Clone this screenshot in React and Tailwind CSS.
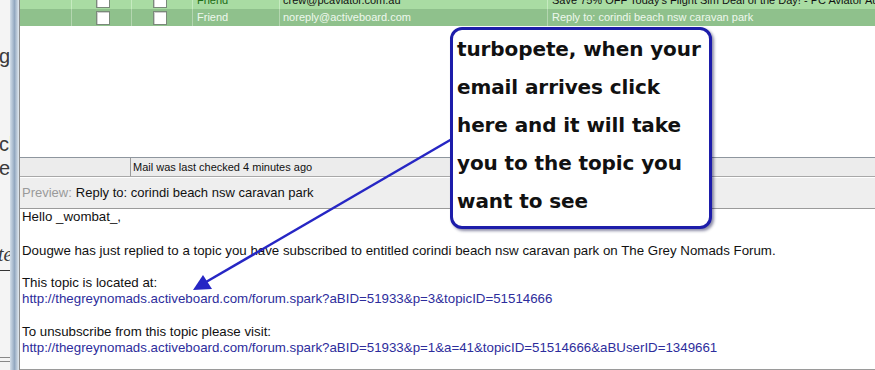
import React from 'react';

const COLS = ['w-[52px]', 'w-[60px]', 'w-[61px]', 'w-[87px]', 'w-[268px]', 'flex-1'];

const Checkbox = () => (
    <div className="w-[14px] h-[14px] bg-white border border-[#7a8a7a] shadow-[inset_1px_1px_0_#cfcfcf]" />
);

const MailRow = ({ selected, from, subject, className }) => {
    const divider = selected ? 'border-r border-[#b4d6b0]' : 'border-r border-[#c6ebc0]';
    const text = selected ? 'text-[#eef8ec]' : 'text-[#111]';
    return (
        <div className={`flex h-[17px] text-[11px] leading-[17px] whitespace-nowrap ${selected ? 'bg-[#8fc18c]' : 'bg-[#a9dca3]'} ${className || ''}`}>
            <div className={`${COLS[0]} ${divider}`} />
            <div className={`${COLS[1]} ${divider} flex items-center justify-center pl-[2px]`}><Checkbox /></div>
            <div className={`${COLS[2]} ${divider} flex items-center justify-center pr-[4px]`}><Checkbox /></div>
            <div className={`${COLS[3]} ${divider} pl-[4px] ${selected ? 'text-[#eef8ec]' : 'text-[#1b6d14]'}`}>Friend</div>
            <div className={`${COLS[4]} ${divider} pl-[3px] ${text} overflow-hidden`}>{from}</div>
            <div className={`${COLS[5]} pl-[4px] ${text} overflow-hidden`}>{subject}</div>
        </div>
    );
};

export default function App() {
    return (
        <div className="relative w-[875px] h-[370px] overflow-hidden bg-white flex font-['Liberation_Sans',Arial,sans-serif]">
            {/* window behind */}
            <div className="w-[10px] bg-[#f4f4f4] overflow-hidden text-[#3a3a3a] text-[20px] leading-[20px] flex flex-col">
                <div className="mt-[46px] -ml-[1px]">g</div>
                <div className="mt-[68px] -ml-[1px]">cl</div>
                <div className="mt-[4px] -ml-[1px]">e</div>
                <div className="mt-[66px] -ml-[2px] italic font-['Liberation_Serif',serif]">te</div>
                <div className="mt-[6px] h-[1px] bg-[#333] w-full" />
                <div className="mt-[86px] h-[1px] bg-[#888] w-full" />
                <div className="mt-[3px] h-[1px] bg-[#888] w-full" />
            </div>
            <div className="w-[9px] bg-gradient-to-r from-[#d4dfea] via-[#93a8c0] to-[#e3eaf1]" />

            {/* main pane */}
            <div className="flex-1 flex flex-col border-l border-[#8c8c8c] min-w-0">
                <MailRow
                    className="-mt-[8px]"
                    from="crew@pcaviator.com.au"
                    subject="Save 75% OFF Today's Flight Sim Deal of the Day! - PC Aviator Australia"
                />
                <MailRow
                    selected
                    from="noreply@activeboard.com"
                    subject="Reply to: corindi beach nsw caravan park"
                />
                <div className="h-[131px] bg-white" />

                {/* status bar */}
                <div className="h-[19px] flex bg-[#ececec] border-t border-[#8e969e] text-[11px] leading-[18px] text-[#111]">
                    <div className="w-[111px] border-r border-[#9a9a9a]" />
                    <div className="pl-[2px] whitespace-nowrap">Mail was last checked 4 minutes ago</div>
                </div>

                {/* preview header */}
                <div className="h-[32px] bg-[#eeeeee] border-t border-[#a8a8a8] shadow-[inset_0_1px_0_#ffffff] flex items-center pl-[2px] text-[13px] whitespace-nowrap">
                    <span className="text-[#9a9a9a]">Preview:</span>
                    <span className="ml-[4px] text-[#111]">Reply to: corindi beach nsw caravan park</span>
                </div>

                {/* message body */}
                <div className="flex-1 bg-white border-t border-[#9a9a9a] border-b pl-[2px] text-[13.3px] leading-[16px] text-[#111] whitespace-nowrap">
                    <div>Hello _wombat_,</div>
                    <div className="h-[16px]" />
                    <div className="mt-[2px]">Dougwe has just replied to a topic you have subscribed to entitled corindi beach nsw caravan park on The Grey Nomads Forum.</div>
                    <div className="h-[16px]" />
                    <div>This topic is located at:</div>
                    <div className="text-[#2d2d9c]">http://thegreynomads.activeboard.com/forum.spark?aBID=51933&amp;p=3&amp;topicID=51514666</div>
                    <div className="h-[16px]" />
                    <div className="mt-[1px]">To unsubscribe from this topic please visit:</div>
                    <div className="text-[#2d2d9c]">http://thegreynomads.activeboard.com/forum.spark?aBID=51933&amp;p=1&amp;a=41&amp;topicID=51514666&amp;aBUserID=1349661</div>
                </div>
            </div>

            {/* annotation arrow */}
            <svg className="absolute left-0 top-0 pointer-events-none" width="875" height="370" viewBox="0 0 875 370">
                <line x1="464" y1="132" x2="206" y2="282" stroke="#2626c4" strokeWidth="2.5" />
                <polygon points="193,290 203,275 212,289" fill="#2626c4" />
            </svg>

            {/* callout */}
            <div className="absolute left-[450px] top-[27px] w-[262px] h-[202px] bg-white border-[3px] border-[#1d1daa] rounded-[12px] shadow-[2px_2px_3px_rgba(0,0,60,0.45)] pl-[4px] font-['DejaVu_Sans',sans-serif] font-bold text-[20px] leading-[38px] text-[#111] tracking-[-0.1px] whitespace-nowrap">
                <div>turbopete, when your</div>
                <div>email arrives click</div>
                <div>here and it will take</div>
                <div>you to the topic you</div>
                <div>want to see</div>
            </div>
        </div>
    );
}
